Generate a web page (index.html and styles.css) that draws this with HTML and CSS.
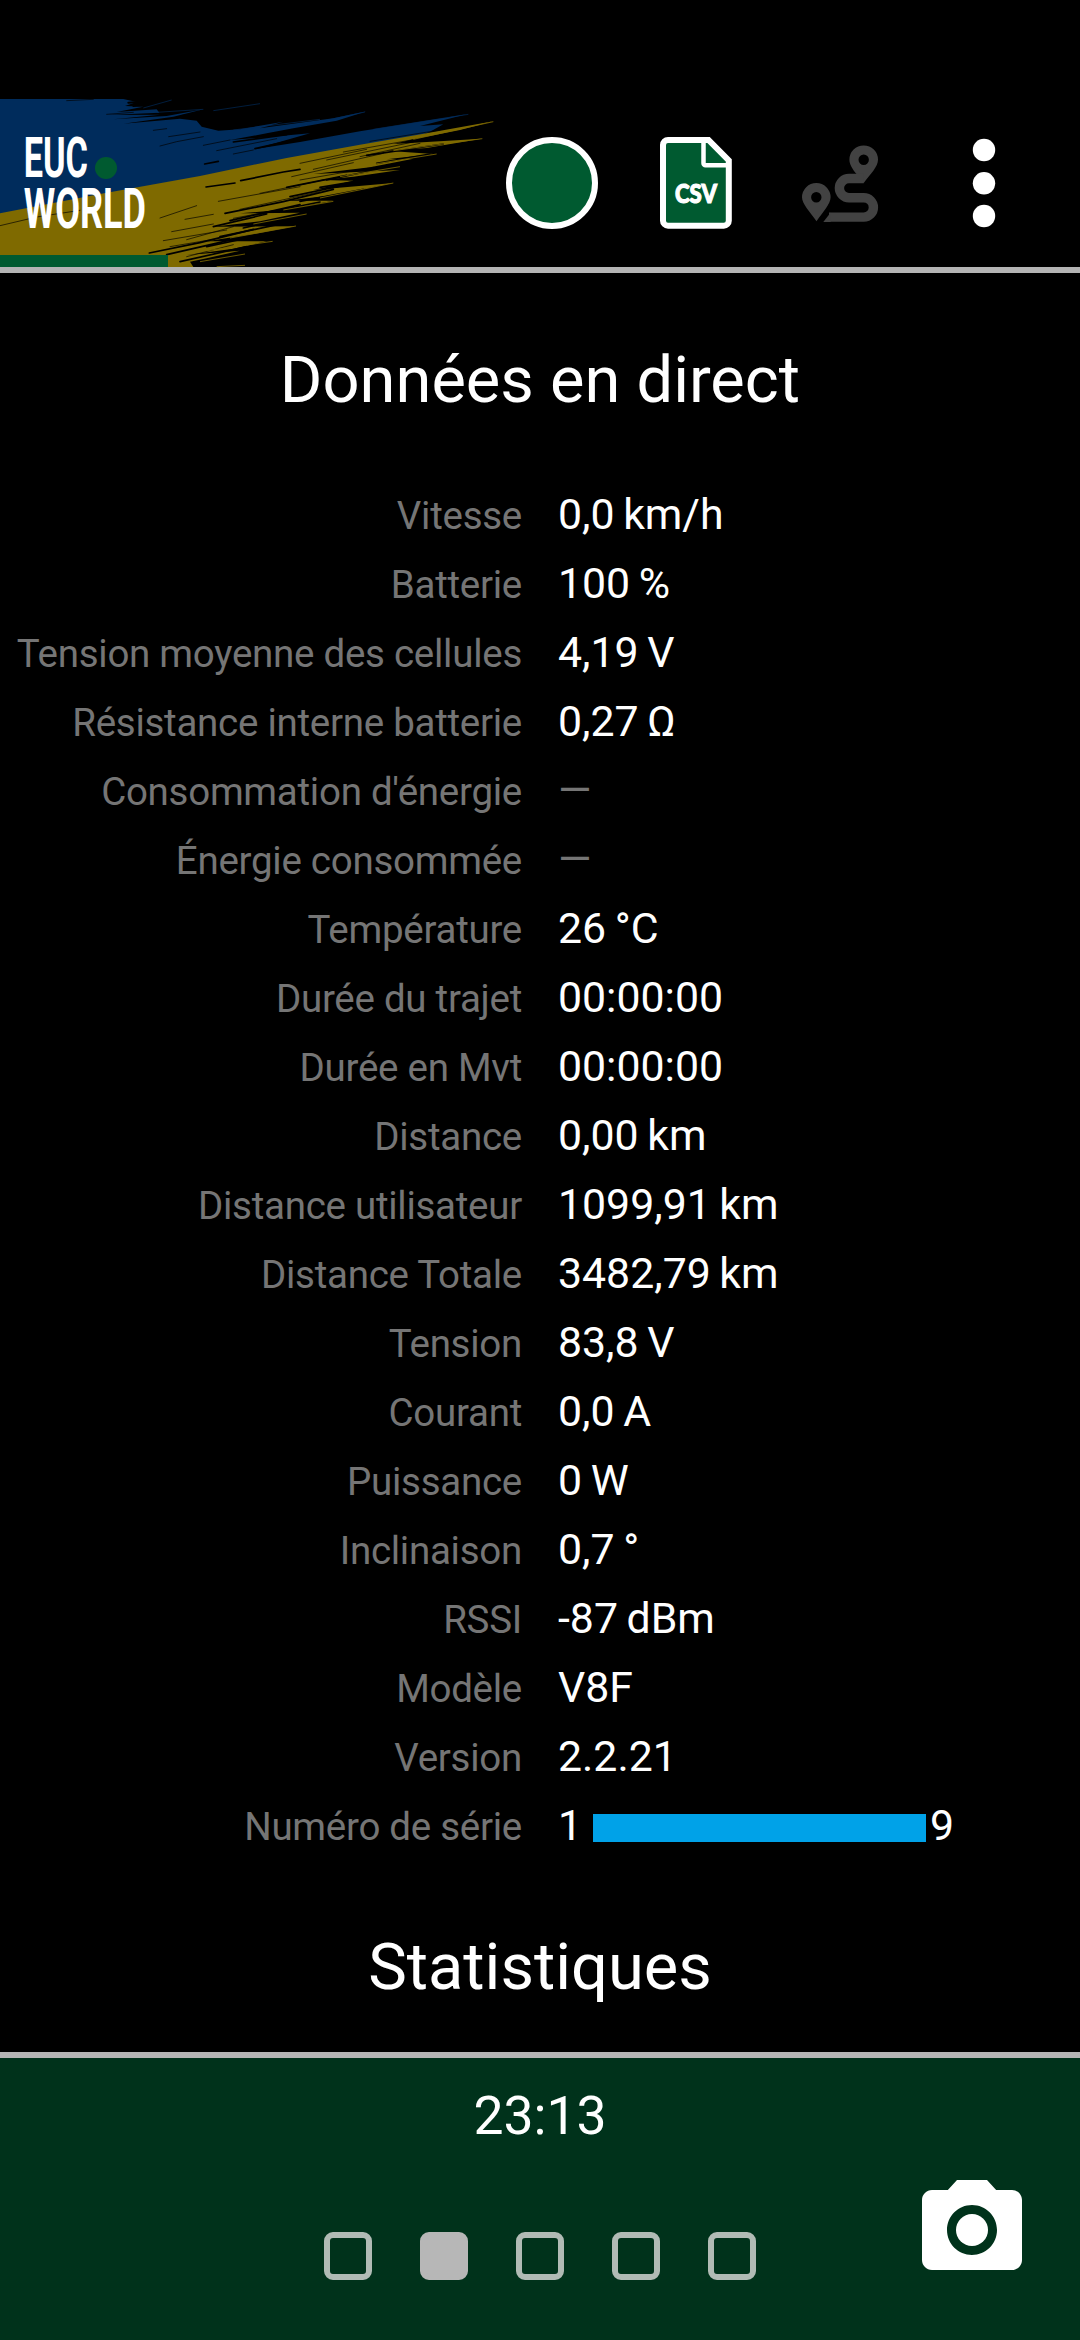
FILE: index.html
```html
<!DOCTYPE html>
<html lang="fr">
<head>
    <meta charset="UTF-8">
    <meta name="viewport" content="width=device-width, initial-scale=1.0">
    <title>EUC World</title>
    <link rel="stylesheet" href="styles.css">
</head>
<body>
    <div class="header">
        <svg class="banner" viewBox="0 57 1440 504">
            <!-- blue brush stroke -->
            <path fill="#002c5c" d="M0 57H370L410 66 375 78 430 80 350 96 470 88 478 98 325 105 480 104 340 118 500 108 610 88 520 110 370 131 540 116 590 122 605 140 655 152 720 148 850 125 780 145 1000 115 1100 94 1010 122 880 145 800 160 690 180 800 172 930 160 760 208 900 186 1080 154 1400 103 1260 138 1330 133 1290 155 1250 170 860 236 600 290 300 344 0 402Z"/>
            <!-- yellow brush stroke -->
            <path fill="#7f6a00" d="M0 400L300 342 600 288 860 234 1080 194 1250 165 1480 124 1380 150 1240 178 1180 192 1445 176 1280 204 1160 212 1300 222 1160 238 1040 240 1240 236 1110 262 940 282 1200 270 1060 290 960 300 1060 302 940 330 1180 309 1000 345 860 362 1000 362 860 388 720 400 900 398 780 424 640 440 885 439 760 462 620 484 800 484 700 506 560 525 720 512 620 535 570 545 580 561H0Z"/>
            <g fill="none" stroke="#000" stroke-linecap="round">
                <path stroke-width="6" d="M385 68L480 60M400 78L560 64M490 92L600 78M545 108L700 86M600 118L760 92M660 138L840 108"/>
                <path stroke-width="2" d="M0 437L110 411 240 391M460 151L500 146M480 198L530 185 610 170M506 170L600 156M650 212L830 176M700 222L760 210M200 62L280 58M320 103L400 97M610 196L690 180"/>
                <path stroke-width="5" d="M618 321L705 309M722 302L850 276 900 268M614 252L655 244M700 186L860 164M765 206L900 176M675 400L850 365 1000 328M690 422L900 374M640 440L800 402M448 519L600 488 760 448M500 524L700 478M540 545L740 500M585 555L760 520M860 322L1040 286M870 350L1050 312"/>
                <path stroke-width="5" d="M980 300L1240 246M960 322L1190 284M1100 226L1330 192M1130 250L1290 222M900 364L1090 328M780 402L960 366M730 444L900 404M660 470L860 428M620 500L800 462"/>
                <path stroke-width="2" d="M480 414L590 377M555 418L640 403M515 455L640 432M490 482L680 450M560 479L700 440M655 364L900 320M720 388L960 335M875 290L1060 248M900 250L1100 208M940 268L1150 220M980 240L1240 186M1030 216L1280 172M1080 140L1350 110M1010 152L1150 128M700 415L860 385M780 340L980 298M560 530L700 494M510 500L640 478M900 300L1120 262M1080 230L1260 190M1110 184L1320 150"/>
            </g>
            <g fill="none" stroke="#002c5c" stroke-width="2">
                <path d="M430 84L515 60M470 97L610 88M640 92L780 71M700 150L960 118M890 140L1095 96M1120 148L1405 103"/>
            </g>
            <g fill="none" stroke="#7f6a00" stroke-width="2.5">
                <path d="M1240 178L1480 125M1180 212L1447 176M1100 256L1310 222M960 354L1180 309M690 474L888 438M620 512L818 484M600 545L735 522M760 432L920 402M850 390L1000 364M1020 290L1200 260M650 560L735 556"/>
            </g>
            <rect class="green" y="525" width="504" height="36"/>
            <circle class="green" cx="318" cy="264" r="33"/>
            <text class="brand" x="71" y="291" textLength="193" lengthAdjust="spacingAndGlyphs">EUC</text>
            <text class="brand" x="71" y="443" textLength="367" lengthAdjust="spacingAndGlyphs">WORLD</text>
        </svg>
        <div class="toolbar">
            <svg class="icon" viewBox="0 0 96 96">
                <circle class="green outlined" cx="48" cy="48" r="43"/>
            </svg>
            <svg class="icon" viewBox="0 0 96 96">
                <path class="green outlined" d="M20 5H60.500L80.800 25.500V85.700a5 5 0 0 1-5 5H20a5 5 0 0 1-5-5V10a5 5 0 0 1 5-5Z"/>
                <path class="fold" d="M55.500 5V28.300a2 2 0 0 0 2 2H81"/>
                <text class="csv" x="27" y="67.500" textLength="42" lengthAdjust="spacingAndGlyphs">CSV</text>
            </svg>
            <svg class="icon" viewBox="0 0 96 96">
                <path class="pin" d="M24.300 48a14.300 14.300 0 0 1 14.300 14.300C38.600 69 31 77 24.500 86.300 18 77 10 69 10 62.300A14.300 14.300 0 0 1 24.300 48Zm0 9.100a5.200 5.200 0 1 0 0 10.400 5.200 5.200 0 0 0 0-10.400Z"/>
                <path class="pin" d="M71.700 10.400A14.300 14.300 0 0 1 86 24.700C86 31.500 79 38.500 71.700 48L64.500 39C60.500 34 57.400 29.500 57.400 24.700A14.300 14.300 0 0 1 71.700 10.400Zm0 9.100a5.200 5.200 0 1 0 0 10.400 5.200 5.200 0 0 0 0-10.400Z"/>
                <path class="road" d="M71.700 43.500H57a9.600 9.600 0 0 0 0 19.200H71.700a9.700 9.700 0 0 1 0 19.400H37"/>
                <path class="pin" d="M31.300 87L38.700 77.400V87Z"/>
            </svg>
            <svg class="icon" viewBox="0 0 96 96">
                <circle class="dot" cx="48" cy="15" r="11.200"/>
                <circle class="dot" cx="48" cy="48.300" r="11.200"/>
                <circle class="dot" cx="48" cy="81" r="11.200"/>
            </svg>
        </div>
    </div>

    <div class="content">
        <h1 class="section-title">Données en direct</h1>
        <div class="data-list">
            <div class="row"><span class="label">Vitesse</span><span class="value">0,0 km/h</span></div>
            <div class="row"><span class="label">Batterie</span><span class="value">100 %</span></div>
            <div class="row"><span class="label">Tension moyenne des cellules</span><span class="value">4,19 V</span></div>
            <div class="row"><span class="label">Résistance interne batterie</span><span class="value">0,27 Ω</span></div>
            <div class="row"><span class="label">Consommation d'énergie</span><span class="value empty">—</span></div>
            <div class="row"><span class="label">Énergie consommée</span><span class="value empty">—</span></div>
            <div class="row"><span class="label">Température</span><span class="value">26 °C</span></div>
            <div class="row"><span class="label">Durée du trajet</span><span class="value">00:00:00</span></div>
            <div class="row"><span class="label">Durée en Mvt</span><span class="value">00:00:00</span></div>
            <div class="row"><span class="label">Distance</span><span class="value">0,00 km</span></div>
            <div class="row"><span class="label">Distance utilisateur</span><span class="value">1099,91 km</span></div>
            <div class="row"><span class="label">Distance Totale</span><span class="value">3482,79 km</span></div>
            <div class="row"><span class="label">Tension</span><span class="value">83,8 V</span></div>
            <div class="row"><span class="label">Courant</span><span class="value">0,0 A</span></div>
            <div class="row"><span class="label">Puissance</span><span class="value">0 W</span></div>
            <div class="row"><span class="label">Inclinaison</span><span class="value">0,7 °</span></div>
            <div class="row"><span class="label">RSSI</span><span class="value">-87 dBm</span></div>
            <div class="row"><span class="label">Modèle</span><span class="value">V8F</span></div>
            <div class="row"><span class="label">Version</span><span class="value">2.2.21</span></div>
            <div class="row"><span class="label">Numéro de série</span><span class="value">1<span class="mask"></span>9</span></div>
        </div>
        <h1 class="section-title">Statistiques</h1>
    </div>

    <div class="footer">
        <div class="clock">23:13</div>
        <div class="pages">
            <span class="page"></span>
            <span class="page active"></span>
            <span class="page"></span>
            <span class="page"></span>
            <span class="page"></span>
        </div>
        <svg class="camera" viewBox="2 2 20 18">
            <path fill="#fff" fill-rule="evenodd" d="M9 2L7.170 4H4c-1.100 0-2 .9-2 2v12c0 1.100.9 2 2 2h16c1.100 0 2-.9 2-2V6c0-1.100-.9-2-2-2h-3.170L15 2H9Zm3 15c-2.760 0-5-2.240-5-5s2.240-5 5-5 5 2.240 5 5-2.240 5-5 5Z"/>
            <circle fill="#fff" cx="12" cy="12" r="3.200"/>
        </svg>
    </div>
</body>
</html>
```

FILE: styles.css
```css
body {
    font-family: Roboto, sans-serif;
    margin: 0;
    background: #000;
    color: #fff;
    display: flex;
    flex-direction: column;
    height: 2340px;
    overflow: hidden;
}

.header {
    display: flex;
    height: 168px;
    padding-top: 99px;
    border-bottom: 6px solid #b4b4b4;
}

.banner {
    width: 480px;
    height: 168px;
    overflow: visible;
}

.brand {
    font-family: Roboto, sans-serif;
    font-weight: 700;
    font-size: 164px;
    fill: #fff;
}

.green {
    fill: #005a30;
}

.toolbar {
    display: grid;
    grid-template-columns: repeat(4, 144px);
    align-items: center;
    justify-items: center;
}

.icon {
    width: 96px;
    height: 96px;
}

.outlined {
    stroke: #fff;
    stroke-width: 6;
}

.fold {
    fill: none;
    stroke: #fff;
    stroke-width: 4.5;
}

.csv {
    font-family: Lato, sans-serif;
    font-weight: 900;
    font-size: 27px;
    fill: #fff;
    stroke: #fff;
    stroke-width: 1.2;
}

.pin {
    fill: #424242;
    fill-rule: evenodd;
}

.road {
    fill: none;
    stroke: #424242;
    stroke-width: 9.4;
}

.dot {
    fill: #fff;
}

.content {
    height: 1712px;
    padding-top: 67px;
    overflow: hidden;
}

.section-title {
    margin: 0;
    font-size: 65px;
    font-weight: 400;
    line-height: 80px;
    text-align: center;
}

.data-list {
    margin: 60px 0 67px;
}

.row {
    display: grid;
    grid-template-columns: 522px 1fr;
    column-gap: 36px;
    align-items: baseline;
    height: 69px;
    line-height: 69px;
    white-space: nowrap;
}

.label {
    font-size: 38.5px;
    letter-spacing: -0.27px;
    color: #757575;
    text-align: right;
}

.value {
    font-size: 42.8px;
    word-spacing: -2px;
}

.empty {
    color: #757575;
}

.mask {
    display: inline-block;
    width: 333px;
    height: 28px;
    margin: 0 4px 0 11px;
    background: #00a2e8;
    vertical-align: -2px;
}

.footer {
    flex: 1;
    display: grid;
    grid-template-columns: 1fr 432px 1fr;
    grid-template-rows: 122px 1fr;
    background: #00321b;
    border-top: 6px solid #b4b4b4;
}

.clock {
    grid-column: 1 / 4;
    font-size: 53.5px;
    line-height: 115px;
    text-align: center;
}

.pages {
    grid-column: 2;
    display: flex;
    justify-content: space-between;
    padding-top: 52px;
}

.page {
    box-sizing: border-box;
    width: 48px;
    height: 48px;
    border: 6px solid #b1bbb5;
    border-radius: 9px;
}

.page.active {
    background: #b7b7b7;
    border-color: #b7b7b7;
}

.camera {
    width: 100px;
    height: 90px;
    justify-self: end;
    margin-right: 58px;
}
```
